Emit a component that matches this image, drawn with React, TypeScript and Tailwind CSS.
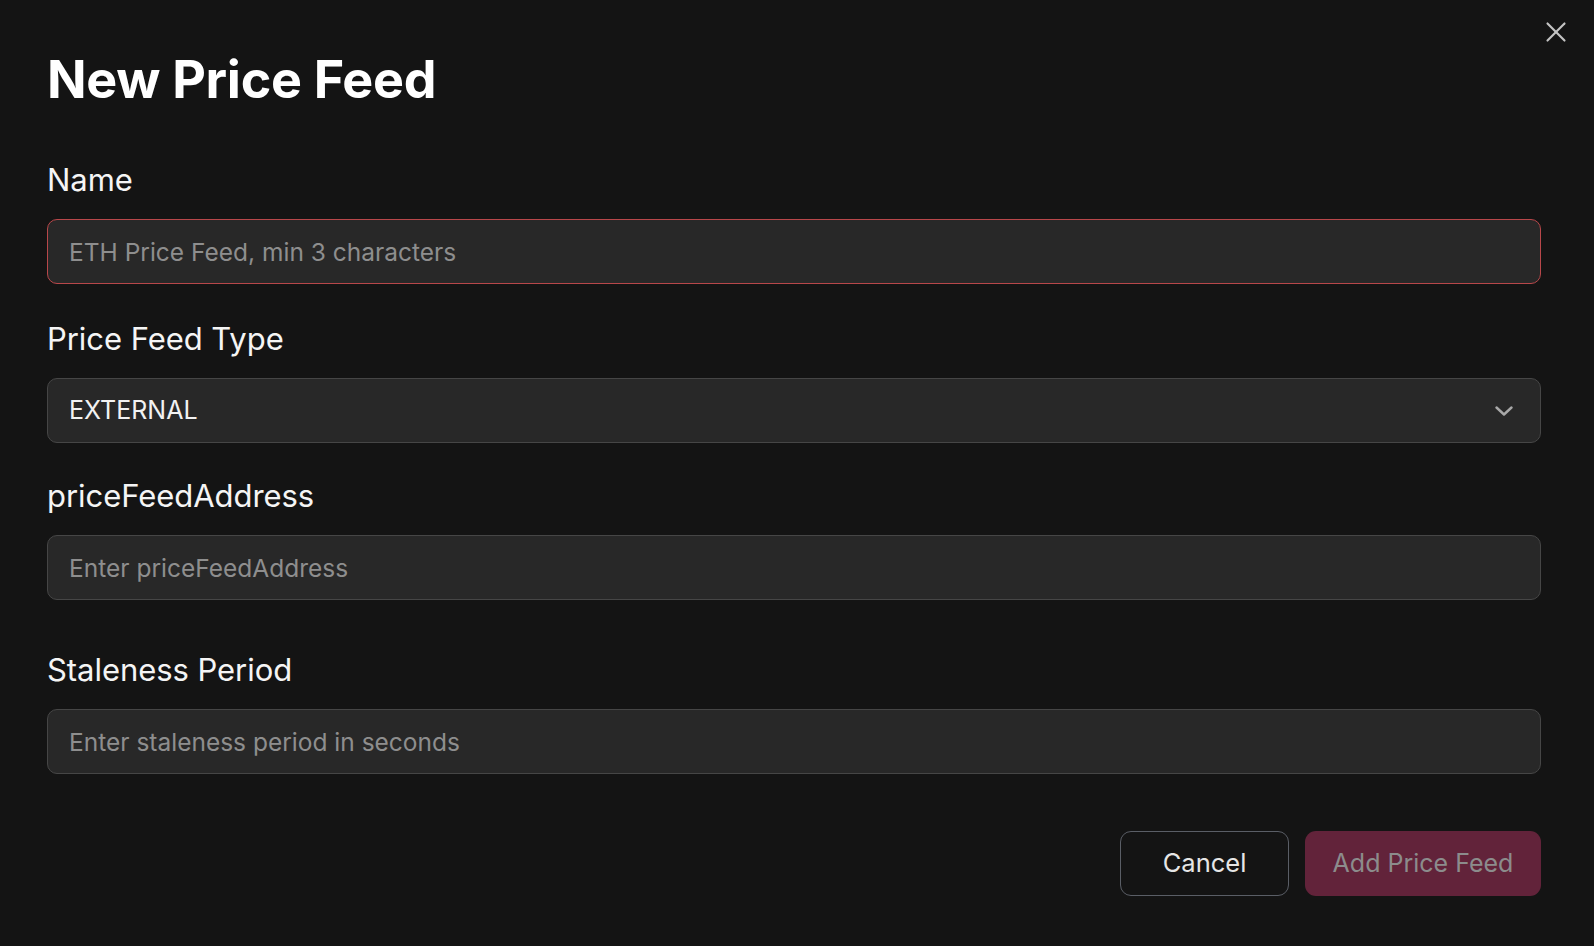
import React from "react";

const font = { fontFamily: "Inter, 'Noto Sans', sans-serif" };

function Label({ children }: { children: React.ReactNode }) {
  return (
    <div className="text-[31px] leading-[30px] text-[#f5f5f5] mb-[24px] tracking-[-0.05px]">
      {children}
    </div>
  );
}

function Field({ placeholder, error }: { placeholder: string; error?: boolean }) {
  return (
    <input
      readOnly
      placeholder={placeholder}
      className={
        "block w-full h-[65px] rounded-[10px] bg-[#282828] px-[21px] text-[24.5px] text-[#f0f0f0] placeholder:text-[#8e8e8e] outline-none border " +
        (error ? "border-[#b8474a]" : "border-[#464646]")
      }
      style={font}
    />
  );
}

export default function App() {
  return (
    <div
      className="relative min-h-[946px] w-full bg-[#141414] pl-[47px] pr-[53px] pt-[54px]"
      style={font}
    >
      <button className="absolute right-[21px] top-[15px] text-[#c4c4c4]">
        <svg width="34" height="34" viewBox="0 0 24 24" fill="none" stroke="currentColor" strokeWidth="1.5" strokeLinecap="round">
          <path d="M18 6 6 18" />
          <path d="m6 6 12 12" />
        </svg>
      </button>

      <h1 className="text-[52px] leading-[52px] font-bold text-white tracking-[-0.3px]">New Price Feed</h1>

      <div className="mt-[59px]">
        <Label>Name</Label>
        <Field placeholder="ETH Price Feed, min 3 characters" error />
      </div>

      <div className="mt-[40px]">
        <Label>Price Feed Type</Label>
        <div className="flex h-[65px] w-full items-center justify-between rounded-[10px] border border-[#464646] bg-[#282828] pl-[21px] pr-[27px]">
          <span className="text-[25px] text-[#f2f2f2]">EXTERNAL</span>
          <svg width="18" height="10" viewBox="0 0 18 10" fill="none" stroke="#a8a8a8" strokeWidth="2.4" strokeLinecap="round" strokeLinejoin="round">
            <path d="M1.5 1.5 9 8.5l7.5-7" />
          </svg>
        </div>
      </div>

      <div className="mt-[38px]">
        <Label>priceFeedAddress</Label>
        <Field placeholder="Enter priceFeedAddress" />
      </div>

      <div className="mt-[55px]">
        <Label>Staleness Period</Label>
        <Field placeholder="Enter staleness period in seconds" />
      </div>

      <div className="mt-[57px] flex justify-end gap-[16px]">
        <button className="h-[65px] w-[169px] rounded-[11px] border border-[#5a5e66] bg-[#141414] text-[25.5px] text-[#e6e6e6]">
          Cancel
        </button>
        <button className="h-[65px] w-[236px] rounded-[11px] bg-[#62233a] text-[25px] text-[#8c8c8c]">
          Add Price Feed
        </button>
      </div>
    </div>
  );
}
